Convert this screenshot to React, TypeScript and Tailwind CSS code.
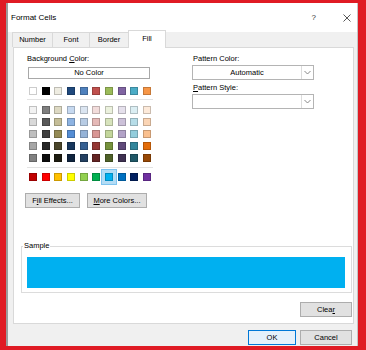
import React from "react";

const baseRow = ["#FFFFFF", "#000000", "#EEECE1", "#1F497D", "#4F81BD", "#C0504D", "#9BBB59", "#8064A2", "#4BACC6", "#F79646"];

const tintRows = [
	["#F2F2F2", "#7F7F7F", "#DDD9C3", "#C6D9F0", "#DBE5F1", "#F2DCDB", "#EBF1DD", "#E5E0EC", "#DBEEF3", "#FDEADA"],
	["#D9D9D9", "#595959", "#C4BD97", "#8DB3E2", "#B8CCE4", "#E5B9B7", "#D7E3BC", "#CCC1D9", "#B7DDE8", "#FBD5B5"],
	["#BFBFBF", "#404040", "#948A54", "#548DD4", "#95B3D7", "#D99694", "#C3D69B", "#B2A2C7", "#92CDDC", "#FAC08F"],
	["#A6A6A6", "#262626", "#4A452A", "#17365D", "#366092", "#953734", "#76923C", "#5F497A", "#31859B", "#E36C09"],
	["#808080", "#0D0D0D", "#1E1C11", "#0F243E", "#244061", "#632423", "#4F6128", "#3F3151", "#205867", "#974806"],
];

const standardRow = ["#C00000", "#FF0000", "#FFC000", "#FFFF00", "#92D050", "#00B050", "#00B0F0", "#0070C0", "#002060", "#7030A0"];
const SELECTED = "#00B0F0";

function Swatch({ color }: { color: string }) {
	const selected = color === SELECTED;
	return (
		<div
			className={
				selected
					? "h-[8px] w-[8px] border border-black/20 ring-[3px] ring-[#b3dcf5] outline outline-offset-[3px] outline-[#7fc3ee]"
					: "h-[8px] w-[8px] border border-black/20"
			}
			style={{ backgroundColor: color }}
		/>
	);
}

function SwatchRow({ colors }: { colors: string[] }) {
	return (
		<div className="ml-[2px] flex w-[122px] justify-between">
			{colors.map((c, i) => (
				<Swatch key={i} color={c} />
			))}
		</div>
	);
}

function DropDown({ value }: { value: string }) {
	return (
		<div className="flex h-[15px] w-[122px] border border-[#b4b4b4] bg-white">
			<div className="flex flex-1 items-center justify-center leading-none">{value}</div>
			<div className="flex w-[12px] items-center justify-center border-l border-[#dcdcdc]">
				<svg width="7" height="5" viewBox="0 0 7 5" fill="none">
					<path d="M0.5 1L3.5 4L6.5 1" stroke="#7a7a7a" strokeWidth="0.9" />
				</svg>
			</div>
		</div>
	);
}

function Button({ children, className = "" }: { children: React.ReactNode; className?: string }) {
	return (
		<div className={`flex h-[15px] items-center justify-center border leading-none ${className}`}>
			{children}
		</div>
	);
}

const tabs = [
	{ label: "Number", w: "w-[40px]" },
	{ label: "Font", w: "w-[37px]" },
	{ label: "Border", w: "w-[39px]" },
];

export default function App() {
	return (
		<div className="flex h-[350px] w-[366px] bg-[#e01b24] pb-[4px] pl-[6px] pr-[8px] pt-[3px] font-['Liberation_Sans',Arial,sans-serif] text-[7.5px] text-black">
			<div className="flex flex-1 flex-col border-l-2 border-r border-l-[#9c9c9c] border-r-[#c4c4c4] bg-[#f0f0f0]">
				{/* title bar */}
				<div className="flex h-[29px] items-center bg-white pl-[3px] pr-[6px]">
					<span className="text-[8px]">Format Cells</span>
					<span className="ml-auto text-[8px] text-[#333]">?</span>
					<svg className="ml-[27px]" width="8" height="8" viewBox="0 0 8 8">
						<path d="M0.5 0.5L7.5 7.5M7.5 0.5L0.5 7.5" stroke="#444" strokeWidth="0.9" />
					</svg>
				</div>

				{/* tabs */}
				<div className="flex h-[15px] items-end pl-[4px]">
					{tabs.map((t) => (
						<div
							key={t.label}
							className={`flex h-[15px] ${t.w} items-center justify-center border-l border-t border-[#d9d9d9] bg-[#f0f0f0]`}
						>
							{t.label}
						</div>
					))}
					<div className="relative z-10 -mb-[1px] flex h-[18px] w-[38px] items-center justify-center border-x border-t border-[#d9d9d9] bg-white pb-[2px]">
						Fill
					</div>
				</div>

				{/* tab page */}
				<div className="ml-[5px] mr-[3px] flex h-[277px] flex-col border border-[#d9d9d9] bg-white">
					<div className="flex pl-[13px] pt-[6px]">
						<div className="flex w-[126px] flex-col">
							<div className="leading-[10px]">
								Background <span className="underline">C</span>olor:
							</div>
							<div className="ml-[1px] mt-[3px] flex h-[12px] w-[122px] items-center justify-center border border-[#a8a8a8] leading-none">
								No Color
							</div>
							<div className="mt-[8px]">
								<SwatchRow colors={baseRow} />
							</div>
							<div className="mt-[4px] h-px bg-[#e3e3e3]" />
							<div className="mt-[6px] flex flex-col gap-[4px]">
								{tintRows.map((r, i) => (
									<SwatchRow key={i} colors={r} />
								))}
							</div>
							<div className="mt-[5px] h-px bg-[#e3e3e3]" />
							<div className="mt-[5px]">
								<SwatchRow colors={standardRow} />
							</div>
							<div className="-ml-[2px] mt-[12px] flex gap-[7px]">
								<Button className="w-[55px] border-[#adadad] bg-[#e1e1e1]">
									F<span className="underline">i</span>ll Effects...
								</Button>
								<Button className="w-[60px] border-[#adadad] bg-[#e1e1e1]">
									<span className="underline">M</span>ore Colors...
								</Button>
							</div>
						</div>

						<div className="ml-[39px] flex w-[122px] flex-col">
							<div className="pl-[1px] leading-[10px]">Pattern Color:</div>
							<div className="mt-[1px]">
								<DropDown value="Automatic" />
							</div>
							<div className="mt-[3px] pl-[1px] leading-[10px]">
								<span className="underline">P</span>attern Style:
							</div>
							<div className="mt-[1px]">
								<DropDown value="" />
							</div>
						</div>
					</div>

					<fieldset className="m-0 ml-[7px] mr-[1px] mt-[33px] border border-[#dcdcdc] p-0">
						<legend className="ml-[1px] px-[1px] leading-[10px]">Sample</legend>
						<div className="mb-[4px] ml-[5px] mr-[6px] mt-[6px] h-[31px] bg-[#00b0f0]" />
					</fieldset>

					<div className="mr-[1px] mt-[9px] flex justify-end">
						<Button className="w-[52px] border-[#adadad] bg-[#e1e1e1]">
							Clea<span className="underline">r</span>
						</Button>
					</div>
				</div>

				{/* dialog buttons */}
				<div className="flex justify-end gap-[4px] pr-[5px] pt-[6px]">
					<Button className="w-[48px] border-[#0078d7] bg-[#e5f1fb]">OK</Button>
					<Button className="w-[52px] border-[#adadad] bg-[#e1e1e1]">Cancel</Button>
				</div>
			</div>
		</div>
	);
}
